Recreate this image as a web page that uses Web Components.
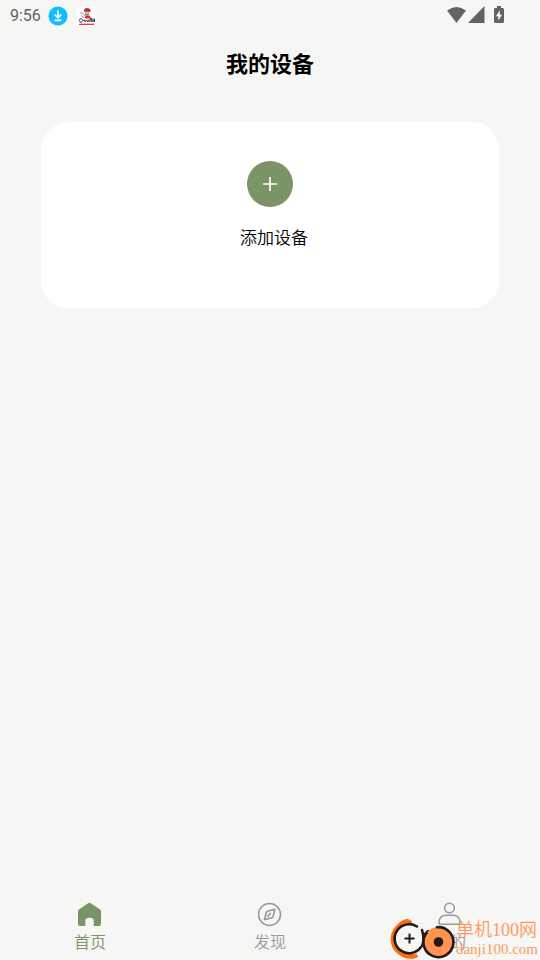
<!DOCTYPE html>
<html lang="zh-CN">
<head>
<meta charset="utf-8">
<meta name="viewport" content="width=device-width, initial-scale=1">
<title>我的设备</title>
<style>
  html, body { margin: 0; }
  body { font-family: "Noto Sans CJK SC", sans-serif; background: #f6f6f4; color: #000; }
</style>
</head>
<body>
<device-app>
  <status-bar slot="status" time="9:56"></status-bar>
  <page-title slot="title">我的设备</page-title>
  <add-card>添加设备</add-card>
  <tab-bar slot="tabs">
    <tab-item icon="home" active>首页</tab-item>
    <tab-item icon="compass">发现</tab-item>
    <tab-item icon="person">我的</tab-item>
  </tab-bar>
  <site-mark slot="mark"></site-mark>
</device-app>

<script>
const define = (name, render) => customElements.define(name, class extends HTMLElement {
  constructor() { super(); this.attachShadow({ mode: "open" }); }
  connectedCallback() { this.shadowRoot.innerHTML = render(this); }
});

define("device-app", () => `
<style>
  :host { display: flex; flex-direction: column; min-height: 100vh; position: relative; }
  main { flex: 1; padding: 34px 41px 24px; }
</style>
<slot name="status"></slot>
<slot name="title"></slot>
<main><slot></slot></main>
<slot name="tabs"></slot>
<slot name="mark"></slot>`);

define("status-bar", el => `
<style>
  :host { display: flex; align-items: center; justify-content: space-between; height: 32px; padding: 0 35px 0 10px; box-sizing: border-box; color: #636363; }
  div { display: flex; align-items: center; }
  .left { gap: 7px; }
  .right { gap: 2px; padding-bottom: 2px; }
  time { font: 400 16px/20px Roboto, sans-serif; }
  svg { display: block; }
  .bat { margin-left: 6px; }
  .app { margin-left: 2px; }
</style>
<div class="left">
  <time>${el.getAttribute("time")}</time>
  <svg width="20" height="20" viewBox="0 0 20 20" aria-hidden="true">
    <circle cx="10" cy="10" r="9.6" fill="#12bdfb"/>
    <path d="M10 4.500v7M6.700 8.500l3.300 3.300 3.300-3.300M6.500 14.300h7" fill="none" stroke="#fff" stroke-width="1.700"/>
  </svg>
  <svg class="app" width="19" height="19" viewBox="0 0 19 19" aria-hidden="true">
    <rect width="19" height="19" fill="#fff"/>
    <path d="M7 3.4C7.3 1 11.8.2 13 3l.5 1.6L7 4.4z" fill="#d92b35"/>
    <circle cx="10" cy="5.5" r="2.2" fill="#efb9a6"/>
    <path d="M7 3.8h6.500V2.500Q10-.5 7 2.500z" fill="#d92b35"/>
    <path d="M7.5 4.200h5.800M8 7l1.800 1L12 7" stroke="#40282c" stroke-width=".8" fill="none"/>
    <path d="M8.500 8.500h4l1.800 3H7.500z" fill="#d6333a"/>
    <path d="M3.2 6.200l2-.8 1 2.200 2 1.600M4 8.500l3 2.500" fill="none" stroke="#857173" stroke-width=".8"/>
    <path d="M2.200 13.500c.2-2 2.600-2.300 3.400-.8M2.300 14.300c.8 1.400 2.400.8 3.300-.3l1.800-.9 1 1.600 1.200-1.800 1.200 1.900 1.300-2M13 15v-3.200h1.800V15M16 11.700v3.400M17.400 11.700v3.400" fill="none" stroke="#292024" stroke-width="1"/>
    <path d="M2 17.300h15" stroke="#d92b35" stroke-width="1.200"/>
  </svg>
</div>
<div class="right">
  <svg width="19" height="18" viewBox="0 0 19 18" aria-hidden="true"><path d="M0 4.500Q9.500-2.500 19 4.500L9.500 17z" fill="currentColor"/></svg>
  <svg width="17" height="18" viewBox="0 0 17 18" aria-hidden="true"><path d="M16.500 0v17H0z" fill="currentColor"/></svg>
  <svg class="bat" width="12" height="18" viewBox="0 0 12 18" aria-hidden="true"><path d="M4 0h4v2h2l1 1v13l-1 1H2l-1-1V3l1-1h2z" fill="currentColor"/><path d="M6.800 4.500L3 10.300h2.300v4.200L9 8.700H6.800z" fill="#fff"/></svg>
</div>`);

define("page-title", () => `
<style>
  :host { display: block; padding: 14px 0 10px; }
  h1 { margin: 0; text-align: center; font-size: 22px; line-height: 32px; font-weight: 700; }
</style>
<h1><slot></slot></h1>`);

define("add-card", () => `
<style>
  :host { display: block; }
  button { display: flex; flex-direction: column; align-items: center; gap: 18px; width: 100%; padding: 39px 24px 59px; border: 0; border-radius: 27px; background: #fff; color: #000; font: inherit; font-size: 17px; line-height: 24px; font-weight: 350; cursor: pointer; }
  .plus { display: grid; place-items: center; width: 46px; height: 46px; border-radius: 50%; background: #7a9465; }
  .label { padding-left: 8px; }
</style>
<button type="button">
  <span class="plus"><svg width="14" height="14" viewBox="0 0 14 14" aria-hidden="true"><path d="M7 0v14M0 7h14" stroke="#fff" stroke-width="1.700"/></svg></span>
  <span class="label"><slot></slot></span>
</button>`);

define("tab-bar", () => `
<style>
  :host { display: block; }
  nav { display: grid; grid-template-columns: repeat(3, 1fr); padding-bottom: 7px; }
</style>
<nav><slot></slot></nav>`);

const icons = {
  home: `<path d="M11.200 1.200Q12.500.3 13.800 1.200L23 7.500Q24 8.200 24 9.300V22q0 2-2 2h-5.300v-5.600q0-2.700-4.200-2.700t-4.200 2.700V24H3q-2 0-2-2V9.300q0-1.100 1-1.800z" fill="currentColor"/>`,
  compass: `<g fill="none" stroke="currentColor" stroke-width="1.600" stroke-linejoin="round"><circle cx="12.500" cy="12.500" r="11"/><path d="M17.800 7.200l-1.600 7q-.3 1.100-1.300 1.600l-7.400 2 1.600-7q.3-1.100 1.300-1.600zM10.300 15l3.500-4.200"/></g>`,
  person: `<g fill="none" stroke="currentColor" stroke-width="1.600"><circle cx="12.500" cy="6" r="4.800"/><path d="M2 20.500c0-4.700 3-7.300 7-7.300h7c4 0 7 2.600 7 7.300q0 1.700-1.700 1.700H3.700Q2 22.200 2 20.500z"/></g>`
};

define("tab-item", el => `
<style>
  :host { display: block; color: #999; }
  :host([active]) { color: #7a9465; }
  a { display: flex; flex-direction: column; align-items: center; gap: 2px; color: inherit; text-decoration: none; font-size: 16px; line-height: 24px; font-weight: 350; }
  svg { display: block; }
</style>
<a href="#${el.getAttribute("icon")}"${el.hasAttribute("active") ? ' aria-current="page"' : ""}>
  <svg width="24" height="25" viewBox="1 0 24 25" aria-hidden="true">${icons[el.getAttribute("icon")]}</svg>
  <span><slot></slot></span>
</a>`);

define("site-mark", () => `
<style>
  :host { position: absolute; right: 2px; bottom: 0; display: flex; align-items: center; color: #ff9960; pointer-events: none; }
  svg { display: block; }
  p { margin: 0; white-space: nowrap; }
  .name { font: 18px/20px "Liberation Serif", "Noto Sans CJK SC", serif; font-weight: 350; }
  .url { font: 15px/18px "Liberation Serif", serif; }
</style>
<svg width="66" height="42" viewBox="0 0 66 42" aria-hidden="true">
  <path d="M22 3.500C18-1.500 12 1.500 8 6C-1 13-2 28 7 35c5 5 14 8 21 4l-1-3c-6 1-12-1-16-5C2 23 4 12 12 7c4-3 7-1.500 10-1z" fill="#ff6b0d"/>
  <circle cx="19.500" cy="20.500" r="14" fill="#f6f6f4"/>
  <path d="M27 8.500A14.500 14.500 0 1 0 31 29" fill="none" stroke="#231a1c" stroke-width="2.600" stroke-linecap="round"/>
  <path d="M19.500 15.500v10M14.500 20.500h10" stroke="#231a1c" stroke-width="2"/>
  <path d="M32 12Q35 22 32 28M34 19q1-4 4-6" fill="none" stroke="#231a1c" stroke-width="2.600" stroke-linecap="round"/>
  <circle cx="48.500" cy="24" r="15" fill="#ff9450"/>
  <path d="M47 9.200A15 15 0 1 1 36.500 15" fill="none" stroke="#231a1c" stroke-width="2.600" stroke-linecap="round"/>
  <circle cx="48.500" cy="24" r="4.800" fill="#231a1c"/>
</svg>
<div><p class="name">单机100网</p><p class="url">danji100.com</p></div>`);
</script>
</body>
</html>
